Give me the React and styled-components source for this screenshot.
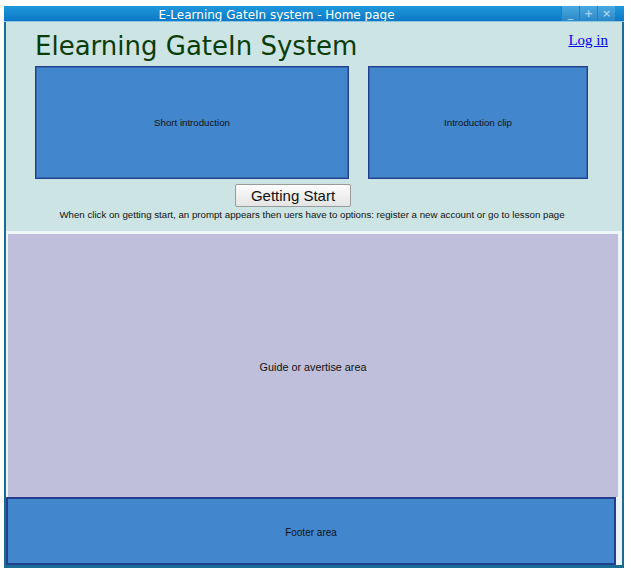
import React from 'react';
import styled, { createGlobalStyle } from 'styled-components';

const GlobalStyle = createGlobalStyle`
  html, body {
    margin: 0;
    padding: 0;
    background: #fff;
  }
`;

const Window = styled.div`
  box-sizing: border-box;
  width: 620px;
  height: 562px;
  margin: 6px 0 0 4px;
  background: #1b6c94;
  padding: 0 2px 3px 2px;
  display: flex;
  flex-direction: column;
`;

const TitleBar = styled.div`
  height: 15px;
  margin: 0 -2px;
  display: flex;
  align-items: flex-start;
  overflow: hidden;
  background: linear-gradient(#1f98dc, #0d78c4);
  border-bottom: 1px solid #8cc6e2;
`;

const Title = styled.div`
  flex: 1;
  text-align: center;
  padding-right: 12px;
  padding-top: 2px;
  color: #fff;
  font: 12px 'DejaVu Sans', sans-serif;
  line-height: 15px;
`;

const WinButtons = styled.div`
  display: flex;
  margin-right: 9px;
`;

const WinButton = styled.div`
  width: 17px;
  height: 15px;
  background: linear-gradient(#4aa8e0, #2a88c8);
  border-left: 1px solid #1a80c4;
  color: #a8d2ee;
  font: bold 11px 'DejaVu Sans', sans-serif;
  line-height: 15px;
  text-align: center;
`;

const TopPanel = styled.div`
  background: #cce5e4;
  height: 209px;
  border-bottom: 3px solid #eef7f7;
  position: relative;
  padding: 0 0 0 29px;
`;

const Heading = styled.h1`
  margin: 0;
  padding-top: 9px;
  font: 26px 'DejaVu Sans', sans-serif;
  line-height: 30px;
  color: #0b3d0b;
  font-weight: normal;
`;

const LoginLink = styled.a`
  position: absolute;
  top: 10px;
  right: 14px;
  font: 15px 'Liberation Serif', serif;
  color: #0000ee;
  text-decoration: underline;
`;

const Boxes = styled.div`
  display: flex;
  gap: 19px;
  margin-top: 5px;
`;

const Box = styled.div`
  box-sizing: border-box;
  width: ${p => p.w}px;
  height: 113px;
  background: #4287cd;
  border: 1px solid #223f8c;
  box-shadow: inset 0 0 0 1px #3566b0;
  display: flex;
  align-items: center;
  justify-content: center;
  font: 9.7px 'Liberation Sans', sans-serif;
  color: #111;
`;

const ButtonRow = styled.div`
  display: flex;
  justify-content: center;
  padding-right: 71px;
  margin-top: 5px;
`;

const StartButton = styled.button`
  box-sizing: border-box;
  width: 116px;
  height: 23px;
  border: 1px solid #9a9a9a;
  border-radius: 2px;
  background: linear-gradient(#fdfdfd, #e4e4e4);
  font: 15px 'Liberation Sans', sans-serif;
  color: #111;
  padding: 0;
`;

const Note = styled.p`
  margin: 2px 0 0;
  padding-right: 33px;
  text-align: center;
  font: 9.7px 'Liberation Sans', sans-serif;
  color: #111;
`;

const Lower = styled.div`
  flex: 1;
  display: flex;
  flex-direction: column;
  background: #eef4f8;
  padding-right: 4px;
`;

const Guide = styled.div`
  flex: 1;
  margin-left: 2px;
  padding-top: 2px;
  background: #bfbfdb;
  display: flex;
  align-items: center;
  justify-content: center;
  font: 10.8px 'Liberation Sans', sans-serif;
  color: #111;
`;

const Footer = styled.div`
  box-sizing: border-box;
  height: 68px;
  margin-right: 2px;
  padding-top: 2px;
  background: #4287cd;
  border: 2px solid #233f8e;
  display: flex;
  align-items: center;
  justify-content: center;
  font: 10px 'Liberation Sans', sans-serif;
  color: #111;
`;

export default function App() {
  return (
    <>
      <GlobalStyle />
      <Window>
        <TitleBar>
          <Title>E-Learning GateIn system - Home page</Title>
          <WinButtons>
            <WinButton>_</WinButton>
            <WinButton>+</WinButton>
            <WinButton>×</WinButton>
          </WinButtons>
        </TitleBar>
        <TopPanel>
          <Heading>Elearning GateIn System</Heading>
          <LoginLink href="#">Log in</LoginLink>
          <Boxes>
            <Box w={314}>Short introduction</Box>
            <Box w={220}>Introduction clip</Box>
          </Boxes>
          <ButtonRow>
            <StartButton>Getting Start</StartButton>
          </ButtonRow>
          <Note>
            When click on getting start, an prompt appears then uers have to options: register a new account or go to lesson page
          </Note>
        </TopPanel>
        <Lower>
          <Guide>Guide or avertise area</Guide>
          <Footer>Footer area</Footer>
        </Lower>
      </Window>
    </>
  );
}
